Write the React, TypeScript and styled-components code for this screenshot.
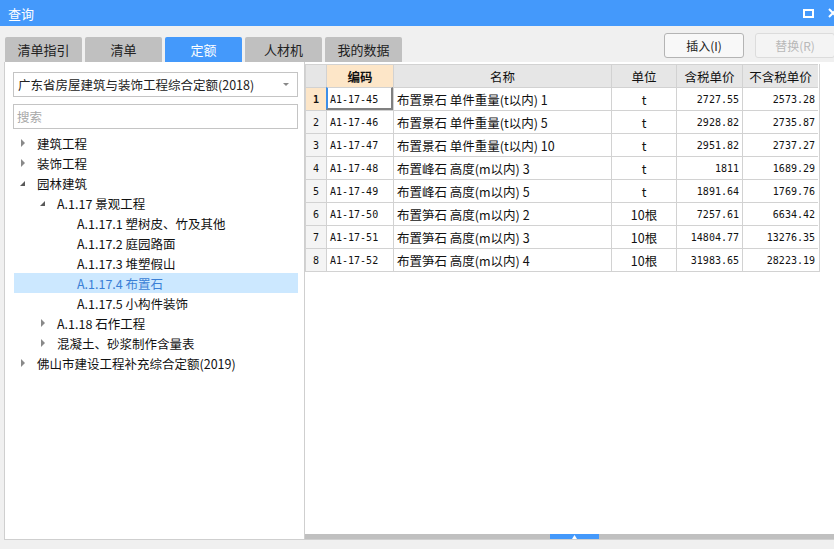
import styled, { createGlobalStyle } from 'styled-components';

const GlobalStyle = createGlobalStyle`
  html, body {
    margin: 0;
    padding: 0;
    background: #f0f0f0;
    overflow: hidden;
  }
  body {
    font-family: "Noto Sans CJK SC", "Liberation Sans", sans-serif;
    font-size: 12px;
    color: #222;
  }
`;

const Window = styled.div`
  width: 834px;
  height: 549px;
  display: flex;
  flex-direction: column;
  background: #f0f0f0;
  overflow: hidden;
`;

const TitleBar = styled.div`
  height: 26px;
  flex: none;
  background: #4499fb;
  color: #fff;
  display: flex;
  align-items: center;
  padding-left: 8px;
  font-size: 13px;
`;

const TitleText = styled.span`
  flex: 1;
`;

const TitleIcons = styled.div`
  display: flex;
  align-items: center;
  gap: 14px;
  margin-right: -4px;
`;

const TopRow = styled.div`
  height: 36px;
  flex: none;
  display: flex;
  align-items: flex-end;
  padding-left: 5px;
`;

const Tabs = styled.div`
  display: flex;
  gap: 3px;
  flex: 1;
`;

const Tab = styled.div<{ $active?: boolean }>`
  width: 77px;
  height: 25px;
  border-radius: 2px 2px 0 0;
  background: ${p => (p.$active ? '#4499fb' : '#c0c0c0')};
  color: ${p => (p.$active ? '#fff' : '#222')};
  display: flex;
  align-items: center;
  justify-content: center;
  font-size: 13px;
`;

const Buttons = styled.div`
  display: flex;
  gap: 11px;
  align-self: flex-start;
  margin-top: 7px;
  margin-right: -1px;
`;

const Button = styled.div<{ $disabled?: boolean }>`
  width: 78px;
  height: 23px;
  border: 1px solid ${p => (p.$disabled ? '#dcdcdc' : '#b4b4b4')};
  border-radius: 3px;
  background: ${p => (p.$disabled ? '#f4f4f4' : '#f8f8f8')};
  color: ${p => (p.$disabled ? '#b8b8b8' : '#222')};
  display: flex;
  align-items: center;
  justify-content: center;
  font-size: 12px;
`;

const Main = styled.div`
  height: 478px;
  flex: none;
  display: flex;
  padding-left: 4px;
`;

const LeftPanel = styled.div`
  width: 301px;
  flex: none;
  background: #fff;
  border: 1px solid #cfcfcf;
  border-top: none;
  box-sizing: border-box;
  padding: 10px 6px 0 8px;
  display: flex;
  flex-direction: column;
`;

const Select = styled.div`
  height: 25px;
  border: 1px solid #c4c4c4;
  box-sizing: border-box;
  display: flex;
  align-items: center;
  padding: 0 4px;
  font-size: 12.5px;
  color: #222;
`;

const SelectText = styled.span`
  flex: 1;
`;

const Caret = styled.span`
  width: 0;
  height: 0;
  border-left: 3px solid transparent;
  border-right: 3px solid transparent;
  border-top: 3px solid #888;
  margin-right: 4px;
`;

const Search = styled.div`
  height: 25px;
  margin-top: 7px;
  border: 1px solid #c4c4c4;
  box-sizing: border-box;
  display: flex;
  align-items: center;
  padding: 0 3px;
  color: #a8a8a8;
  font-size: 12.5px;
`;

const Tree = styled.div`
  margin-top: 4px;
  display: flex;
  flex-direction: column;
`;

const TreeRow = styled.div<{ $level: number; $selected?: boolean }>`
  height: 20px;
  display: flex;
  align-items: center;
  padding-left: ${p => 5 + p.$level * 20}px;
  background: ${p => (p.$selected ? '#cce8ff' : 'transparent')};
  color: ${p => (p.$selected ? '#3a7fd6' : '#111')};
  font-size: 12.5px;
  margin-left: 1px;
`;

const Arrow = styled.span<{ $open?: boolean }>`
  width: 18px;
  flex: none;
  display: flex;
  align-items: center;
  justify-content: flex-start;
  &::before {
    content: '';
    display: ${p => (p.$open === undefined ? 'none' : 'block')};
    width: 0;
    height: 0;
    ${p =>
      p.$open
        ? `border-left: 5px solid transparent; border-bottom: 5px solid #595959; margin-left: 1px;`
        : `border-top: 4px solid transparent; border-bottom: 4px solid transparent; border-left: 4px solid #8a8a8a; margin-left: 2px;`}
  }
`;

const RightPanel = styled.div`
  flex: 1;
  background: #fff;
  display: flex;
  flex-direction: column;
  border-bottom: 1px solid #cfcfcf;
`;

const TableArea = styled.div`
  flex: 1;
  padding-top: 2px;
`;

const Grid = styled.div`
  display: grid;
  grid-template-columns: 21px 67px 218px 65px 66px 76px;
  width: 514px;
  border-right: 1px solid #d2d2d2;
  border-bottom: 1px solid #d2d2d2;
  font-family: "DejaVu Sans Mono", "Liberation Mono", "Noto Sans CJK SC", monospace;
  font-size: 10px;
`;

const Cell = styled.div<{ $align?: 'left' | 'center' | 'right'; $bg?: string; $bold?: boolean; $head?: boolean }>`
  height: 23px;
  box-sizing: border-box;
  border-left: 1px solid #d2d2d2;
  border-top: 1px solid #d2d2d2;
  display: flex;
  align-items: center;
  justify-content: ${p => (p.$align === 'right' ? 'flex-end' : p.$align === 'center' ? 'center' : 'flex-start')};
  padding: 0 3px;
  background: ${p => p.$bg || '#fff'};
  font-weight: ${p => (p.$bold ? 700 : 400)};
  font-family: ${p => (p.$head ? '"Noto Sans CJK SC", sans-serif' : 'inherit')};
  font-size: ${p => (p.$head ? '12.5px' : '10px')};
  white-space: nowrap;
  overflow: hidden;
  color: #111;
`;

const ActiveCell = styled(Cell)`
  border-left: 2px solid #3d8ee8;
  border-right: 2px solid #808080;
  border-bottom: 2px solid #808080;
  padding-left: 2px;
  padding-top: 2px;
`;

const NameText = styled.span`
  font-family: "Noto Sans CJK SC", sans-serif;
  font-size: 12.5px;
`;

const ScrollBar = styled.div`
  height: 5px;
  flex: none;
  background: #c0c0c0;
  display: flex;
  justify-content: center;
`;

const ScrollHandle = styled.div`
  width: 49px;
  height: 5px;
  background: #4499fb;
  display: flex;
  align-items: center;
  justify-content: center;
  margin-left: 10px;
`;

const tree = [
  { level: 0, open: false, text: '建筑工程' },
  { level: 0, open: false, text: '装饰工程' },
  { level: 0, open: true, text: '园林建筑' },
  { level: 1, open: true, text: 'A.1.17 景观工程' },
  { level: 2, text: 'A.1.17.1 塑树皮、竹及其他' },
  { level: 2, text: 'A.1.17.2 庭园路面' },
  { level: 2, text: 'A.1.17.3 堆塑假山' },
  { level: 2, text: 'A.1.17.4 布置石', selected: true },
  { level: 2, text: 'A.1.17.5 小构件装饰' },
  { level: 1, open: false, text: 'A.1.18 石作工程' },
  { level: 1, open: false, text: '混凝土、砂浆制作含量表' },
  { level: 0, open: false, text: '佛山市建设工程补充综合定额(2019)' },
];

const rows = [
  ['A1-17-45', '布置景石 单件重量(t以内) 1', 't', '2727.55', '2573.28'],
  ['A1-17-46', '布置景石 单件重量(t以内) 5', 't', '2928.82', '2735.87'],
  ['A1-17-47', '布置景石 单件重量(t以内) 10', 't', '2951.82', '2737.27'],
  ['A1-17-48', '布置峰石 高度(m以内) 3', 't', '1811', '1689.29'],
  ['A1-17-49', '布置峰石 高度(m以内) 5', 't', '1891.64', '1769.76'],
  ['A1-17-50', '布置笋石 高度(m以内) 2', '10根', '7257.61', '6634.42'],
  ['A1-17-51', '布置笋石 高度(m以内) 3', '10根', '14804.77', '13276.35'],
  ['A1-17-52', '布置笋石 高度(m以内) 4', '10根', '31983.65', '28223.19'],
];

const HEAD_BG = '#e6e6e6';
const ORANGE = '#fde6c8';

export default function App() {
  return (
    <Window>
      <GlobalStyle />
      <TitleBar>
        <TitleText>查询</TitleText>
        <TitleIcons>
          <svg width="11" height="9" viewBox="0 0 11 9">
            <rect x="1" y="1" width="9" height="7" fill="none" stroke="#fff" strokeWidth="2" />
          </svg>
          <svg width="10" height="10" viewBox="0 0 10 10">
            <path d="M1 1 L9 9 M9 1 L1 9" stroke="#fff" strokeWidth="2" />
          </svg>
        </TitleIcons>
      </TitleBar>
      <TopRow>
        <Tabs>
          <Tab>清单指引</Tab>
          <Tab>清单</Tab>
          <Tab $active>定额</Tab>
          <Tab>人材机</Tab>
          <Tab>我的数据</Tab>
        </Tabs>
        <Buttons>
          <Button>插入(I)</Button>
          <Button $disabled>替换(R)</Button>
        </Buttons>
      </TopRow>
      <Main>
        <LeftPanel>
          <Select>
            <SelectText>广东省房屋建筑与装饰工程综合定额(2018)</SelectText>
            <Caret />
          </Select>
          <Search>搜索</Search>
          <Tree>
            {tree.map((t, i) => (
              <TreeRow key={i} $level={t.level} $selected={t.selected}>
                <Arrow $open={t.open} />
                {t.text}
              </TreeRow>
            ))}
          </Tree>
        </LeftPanel>
        <RightPanel>
          <TableArea>
            <Grid>
              <Cell $bg={HEAD_BG} $head />
              <Cell $bg={ORANGE} $align="center" $bold $head>编码</Cell>
              <Cell $bg={HEAD_BG} $align="center" $head>名称</Cell>
              <Cell $bg={HEAD_BG} $align="center" $head>单位</Cell>
              <Cell $bg={HEAD_BG} $align="center" $head>含税单价</Cell>
              <Cell $bg={HEAD_BG} $align="center" $head>不含税单价</Cell>
              {rows.map((r, i) => {
                const Code = i === 0 ? ActiveCell : Cell;
                return [
                  <Cell key={`n${i}`} $bg={i === 0 ? ORANGE : '#f4f4f4'} $align="center" $bold={i === 0}>
                    {i + 1}
                  </Cell>,
                  <Code key={`c${i}`}>{r[0]}</Code>,
                  <Cell key={`m${i}`}>
                    <NameText>{r[1]}</NameText>
                  </Cell>,
                  <Cell key={`u${i}`} $align="center">
                    <NameText>{r[2]}</NameText>
                  </Cell>,
                  <Cell key={`p${i}`} $align="right">{r[3]}</Cell>,
                  <Cell key={`q${i}`} $align="right">{r[4]}</Cell>,
                ];
              })}
            </Grid>
          </TableArea>
          <ScrollBar>
            <ScrollHandle>
              <svg width="7" height="4" viewBox="0 0 7 4">
                <path d="M3.5 0 L6 4 L1 4 Z" fill="#fff" />
              </svg>
            </ScrollHandle>
          </ScrollBar>
        </RightPanel>
      </Main>
    </Window>
  );
}
